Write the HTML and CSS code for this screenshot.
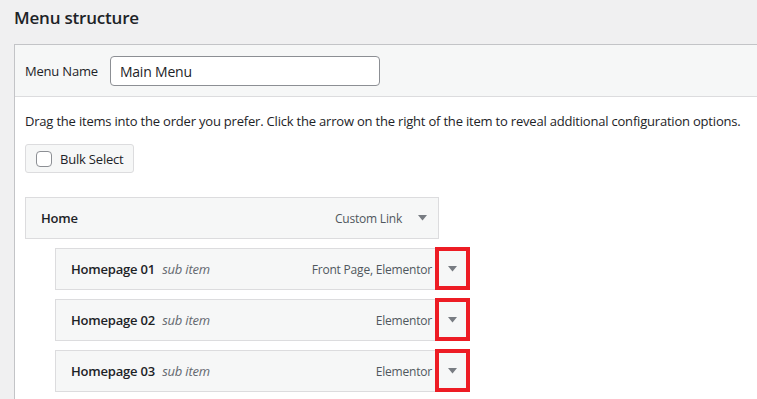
FILE: index.html
```html
<!DOCTYPE html>
<html lang="en">
<head>
    <meta charset="UTF-8">
    <meta name="viewport" content="width=device-width, initial-scale=1.0">
    <title>Menu structure</title>
    <link rel="stylesheet" href="styles.css">
</head>
<body>
    <div class="wrap">
        <h2 class="title">Menu structure</h2>

        <div class="panel">
            <div class="panel-header">
                <label for="menu-name" class="menu-name-label">Menu Name</label>
                <input type="text" id="menu-name" class="menu-name-input" value="Main Menu">
            </div>

            <div class="panel-body">
                <p class="drag-hint">Drag the items into the order you prefer. Click the arrow on the right of the item to reveal additional configuration options.</p>

                <label class="bulk-btn">
                    <span class="checkbox"></span>
                    Bulk Select
                </label>

                <ul class="menu">
                    <li class="menu-item">
                        <span class="item-title">Home</span>
                        <span class="item-type">Custom Link</span>
                        <span class="item-toggle">
                            <svg width="9" height="6" viewBox="0 0 9 6"><polygon points="0,0 9,0 4.5,5.5" /></svg>
                        </span>
                    </li>
                    <li class="menu-item depth-1">
                        <span class="item-title">Homepage 01 <em class="sub-label">sub item</em></span>
                        <span class="item-type">Front Page, Elementor</span>
                        <span class="item-toggle highlight">
                            <svg width="9" height="6" viewBox="0 0 9 6"><polygon points="0,0 9,0 4.5,5.5" /></svg>
                        </span>
                    </li>
                    <li class="menu-item depth-1">
                        <span class="item-title">Homepage 02 <em class="sub-label">sub item</em></span>
                        <span class="item-type">Elementor</span>
                        <span class="item-toggle highlight">
                            <svg width="9" height="6" viewBox="0 0 9 6"><polygon points="0,0 9,0 4.5,5.5" /></svg>
                        </span>
                    </li>
                    <li class="menu-item depth-1">
                        <span class="item-title">Homepage 03 <em class="sub-label">sub item</em></span>
                        <span class="item-type">Elementor</span>
                        <span class="item-toggle highlight">
                            <svg width="9" height="6" viewBox="0 0 9 6"><polygon points="0,0 9,0 4.5,5.5" /></svg>
                        </span>
                    </li>
                </ul>
            </div>
        </div>
    </div>
</body>
</html>
```

FILE: styles.css
```css
:root {
    --bg-color: #f0f0f1;
    --text-color: #1d2327;
    --muted-text: #50575e;
    --panel-border: #c3c4c7;
    --light-border: #dcdcde;
    --soft-bg: #f6f7f7;
    --input-border: #8c8f94;
    --arrow-color: #787c82;
    --mark-color: #ed1c24;
}

body {
    margin: 0;
    font-family: "Open Sans", "Noto Sans", sans-serif;
    font-size: 13px;
    letter-spacing: -0.2px;
    color: var(--text-color);
    background-color: var(--bg-color);
    overflow: hidden;
}

.wrap {
    padding-left: 14px;
}

.title {
    margin: 0;
    padding: 7px 0 0;
    height: 37px;
    font-size: 17px;
    font-weight: 600;
    line-height: 22px;
    box-sizing: border-box;
}

.panel {
    margin-top: 7px;
    border-top: 1px solid var(--panel-border);
    border-left: 1px solid var(--panel-border);
    background-color: #ffffff;
    min-height: 354px;
}

.panel-header {
    display: flex;
    align-items: center;
    gap: 12px;
    padding: 11px 10px 10px;
    background-color: var(--soft-bg);
    border-bottom: 1px solid var(--light-border);
}

.menu-name-label {
    font-size: 13px;
}

.menu-name-input {
    width: 270px;
    height: 30px;
    box-sizing: border-box;
    padding: 0 9px;
    border: 1px solid var(--input-border);
    border-radius: 4px;
    font-family: inherit;
    font-size: 14px;
    letter-spacing: -0.2px;
    color: var(--text-color);
    background-color: #ffffff;
}

.panel-body {
    padding: 0 10px;
}

.drag-hint {
    margin: 14px 0 13px;
    line-height: 20px;
    white-space: nowrap;
}

.bulk-btn {
    display: flex;
    align-items: center;
    gap: 8px;
    width: fit-content;
    height: 29px;
    padding: 0 9px 0 10px;
    box-sizing: border-box;
    border: 1px solid var(--light-border);
    border-radius: 3px;
    background-color: var(--soft-bg);
    color: var(--text-color);
}

.checkbox {
    width: 16px;
    height: 16px;
    box-sizing: border-box;
    border: 1px solid var(--input-border);
    border-radius: 4px;
    background-color: #ffffff;
}

.menu {
    list-style: none;
    margin: 24px 0 0;
    padding: 0;
    display: flex;
    flex-direction: column;
    gap: 9px;
}

.menu-item {
    display: flex;
    align-items: center;
    width: 414px;
    height: 42px;
    box-sizing: border-box;
    border: 1px solid var(--light-border);
    background-color: var(--soft-bg);
    padding-left: 15px;
}

.menu-item.depth-1 {
    margin-left: 30px;
}

.item-title {
    flex: 1;
    font-weight: 600;
}

.sub-label {
    font-weight: 400;
    color: #646970;
    margin-left: 4px;
}

.item-type {
    font-size: 12px;
    color: var(--muted-text);
}

.item-toggle {
    position: relative;
    display: flex;
    align-items: center;
    justify-content: center;
    width: 36px;
    height: 100%;
    padding-left: 4px;
    box-sizing: border-box;
}

.item-toggle svg {
    fill: var(--arrow-color);
}

.item-toggle.highlight::after {
    content: "";
    position: absolute;
    top: -2px;
    bottom: -1px;
    left: 3px;
    right: -2px;
    border: 4px solid var(--mark-color);
}
```
